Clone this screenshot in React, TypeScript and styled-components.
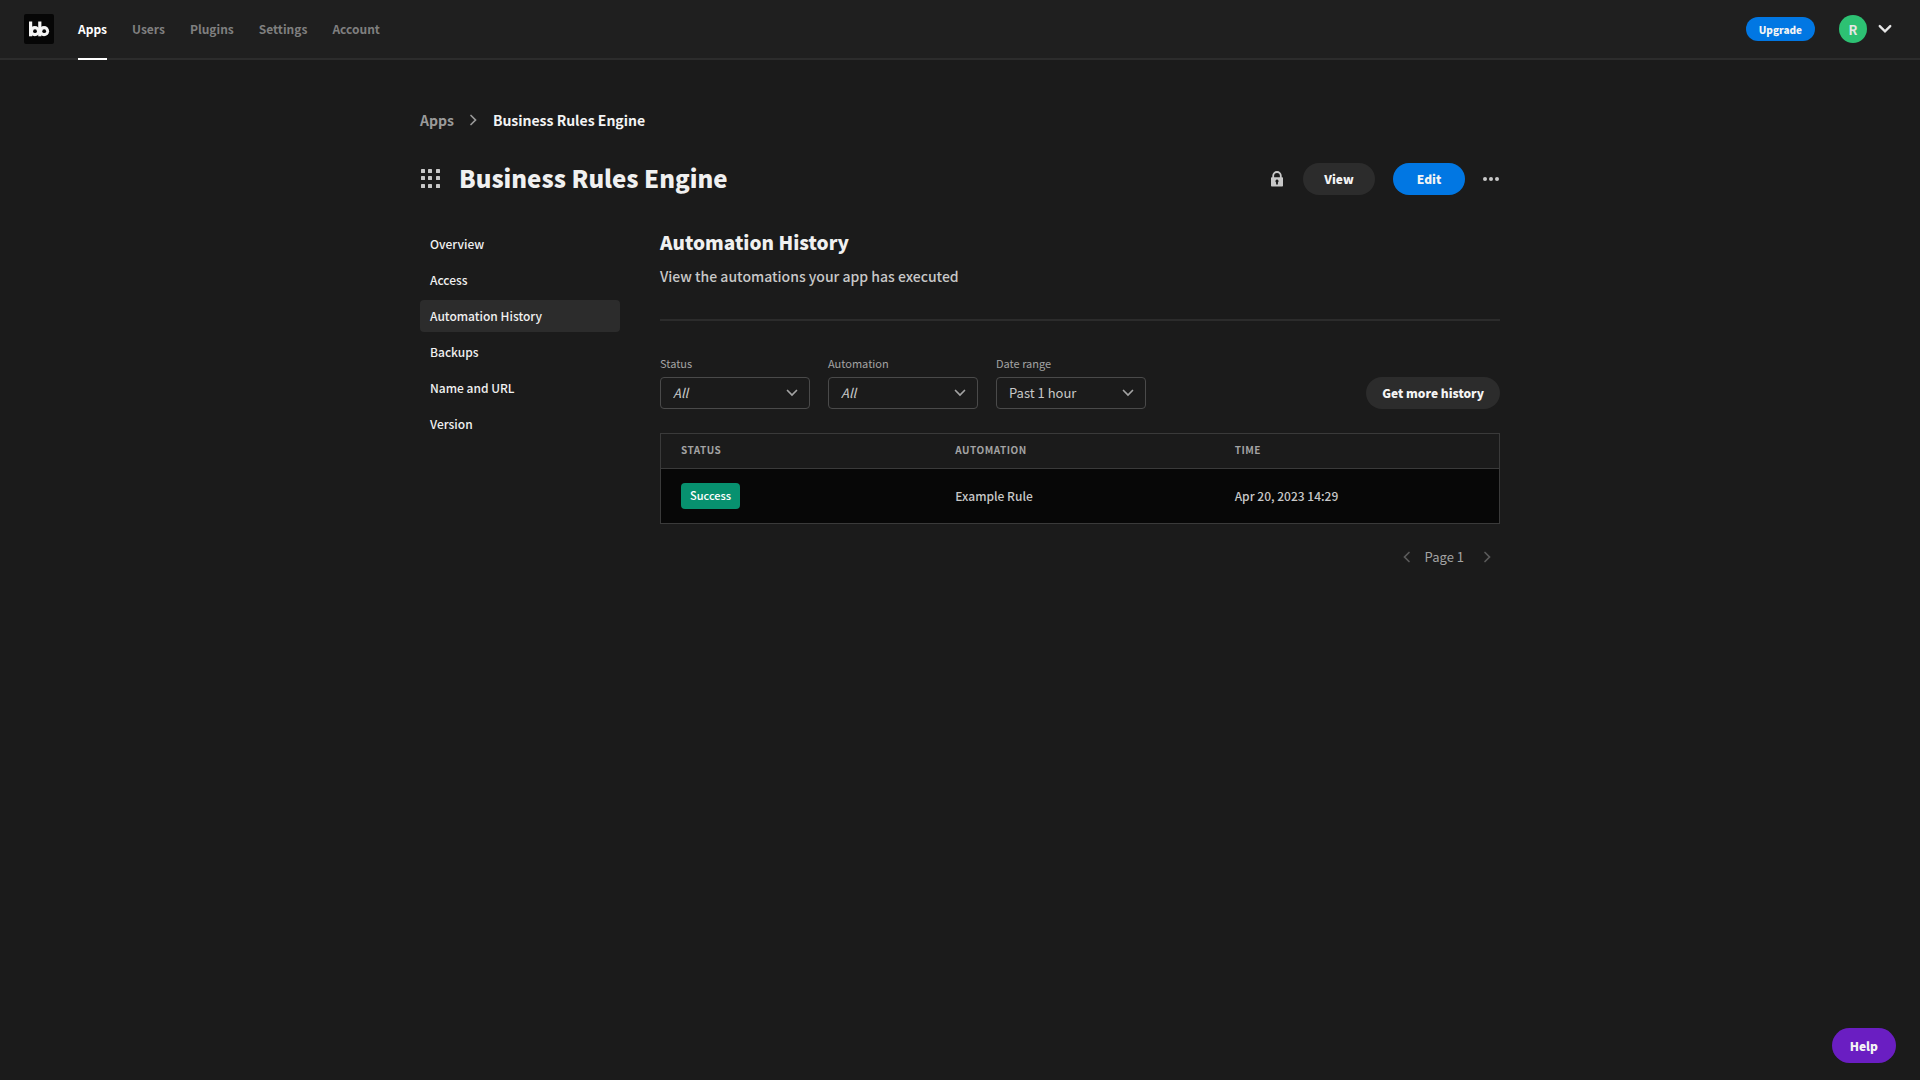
import React from "react";
import styled, { createGlobalStyle, css } from "styled-components";

const GlobalStyle = createGlobalStyle`
  *, *::before, *::after { box-sizing: border-box; }
  body {
    margin: 0;
    background: #1b1b1b;
    color: #f0f0f0;
    font-family: "Source Sans Pro", "Noto Sans CJK SC", "Noto Sans", sans-serif;
    font-size: 13px;
    line-height: 20px;
  }
  h1, h2, p, ol, ul { margin: 0; padding: 0; }
  ol, ul { list-style: none; }
  button, select, input { font-family: inherit; }
  a { color: inherit; text-decoration: none; }
  svg { display: block; }
`;

const TopBar = styled.header`
  display: flex;
  align-items: stretch;
  justify-content: space-between;
  height: 60px;
  padding: 0 24px;
  background: #1f1f1f;
  border-bottom: 2px solid #2c2c2c;
`;

const BarGroup = styled.div`
  display: flex;
  align-items: center;
  gap: 24px;
`;

const Nav = styled.nav`
  display: flex;
  align-self: stretch;
  gap: 25px;
`;

const NavLink = styled.a<{ $active?: boolean }>`
  display: flex;
  align-items: center;
  height: 60px;
  padding-bottom: 2px;
  font-size: 12px;
  font-weight: 600;
  color: ${(p) => (p.$active ? "#ffffff" : "#7f7f7f")};
  box-shadow: ${(p) => (p.$active ? "inset 0 -2px 0 #ffffff" : "none")};
`;

const PillButton = styled.button<{ $tone: "blue" | "grey" | "purple"; $size?: "s" | "m" | "l" }>`
  border: 0;
  border-radius: 18px;
  color: #f4f4f4;
  font-weight: 900;
  cursor: pointer;
  background: ${(p) => ({ blue: "#0177e3", grey: "#2c2c2c", purple: "#6a1ec2" })[p.$tone]};
  ${(p) =>
    ({
      s: css`height: 24px; padding: 0 13px; font-size: 10px;`,
      m: css`height: 32px; min-width: 72px; padding: 0 16px 2px; font-size: 12px;`,
      l: css`height: 35px; padding: 0 18px 1px; font-size: 12px;`,
    })[p.$size ?? "m"]}
`;

const IconButton = styled.button`
  display: flex;
  align-items: center;
  justify-content: center;
  padding: 0;
  border: 0;
  background: none;
  color: #c8c8c8;
  cursor: pointer;
  &:disabled { color: #5a5a5a; cursor: default; }
`;

const Avatar = styled.span`
  display: grid;
  place-items: center;
  width: 28px;
  height: 28px;
  border-radius: 50%;
  background: #2dc173;
  font-weight: 700;
`;

const UserMenu = styled.button`
  display: flex;
  align-items: center;
  gap: 11px;
  padding: 0 4px 0 0;
  border: 0;
  background: none;
  color: #e6e6e6;
  font-size: 13px;
  cursor: pointer;
`;

const Page = styled.main`
  max-width: 1080px;
  margin: 0 auto;
  padding-top: 48px;
`;

const Crumbs = styled.ol`
  display: flex;
  align-items: center;
  height: 24px;
  gap: 14px;
  font-size: 14px;
  font-weight: 600;
  color: #9a9a9a;
`;

const Crumb = styled.li<{ $current?: boolean }>`
  display: flex;
  align-items: center;
  gap: 13px;
  color: ${(p) => (p.$current ? "#f4f4f4" : "inherit")};
`;

const TitleRow = styled.div`
  display: flex;
  align-items: center;
  justify-content: space-between;
  height: 36px;
  margin-top: 29px;
`;

const TitleGroup = styled.div`
  display: flex;
  align-items: center;
  gap: 18px;
  padding-bottom: 2px;
`;

const AppTitle = styled.h1`
  font-size: 24px;
  line-height: 34px;
  font-weight: 900;
`;

const Actions = styled.div`
  display: flex;
  align-items: center;
  gap: 18px;
`;

const Columns = styled.div`
  display: grid;
  grid-template-columns: 200px minmax(0, 1fr);
  gap: 40px;
  margin-top: 31px;
`;

const SideNav = styled.nav`
  display: flex;
  flex-direction: column;
  gap: 4px;
`;

const SideLink = styled.a<{ $active?: boolean }>`
  height: 32px;
  padding: 0 10px;
  border-radius: 4px;
  font-size: 12px;
  font-weight: 500;
  line-height: 32px;
  background: ${(p) => (p.$active ? "#2c2c2c" : "transparent")};
`;

const SectionTitle = styled.h2`
  font-size: 19px;
  line-height: 28px;
  font-weight: 900;
`;

const SectionText = styled.p`
  margin-top: 8px;
  font-size: 14px;
  font-weight: 500;
  line-height: 24px;
  color: #c8c8c8;
`;

const Divider = styled.hr`
  height: 2px;
  margin: 31px 0 32px;
  border: 0;
  background: #2c2c2c;
`;

const Filters = styled.div`
  display: flex;
  align-items: flex-end;
  gap: 18px;
`;

const Spacer = styled.div`
  flex: 1;
`;

const Field = styled.div`
  width: 150px;
`;

const FieldLabel = styled.label`
  display: block;
  height: 24px;
  font-size: 11px;
  line-height: 20px;
  color: #a3a3a3;
`;

const SelectBox = styled.div`
  display: grid;
  align-items: center;
  > * { grid-area: 1 / 1; }
  > svg { justify-self: end; margin-right: 12px; pointer-events: none; color: #a3a3a3; }
`;

const Select = styled.select<{ $placeholder?: boolean }>`
  width: 100%;
  height: 32px;
  padding: 0 32px 1px 12px;
  appearance: none;
  border: 1px solid #4a4a4a;
  border-radius: 4px;
  background: transparent;
  color: #c8c8c8;
  font-size: 13px;
  font-style: ${(p) => (p.$placeholder ? "italic" : "normal")};
`;

const Table = styled.table`
  width: 100%;
  margin-top: 24px;
  table-layout: fixed;
  border-collapse: separate;
  border-spacing: 0;
  border: 1px solid #3a3a3a;
  text-align: left;
  th, td { padding: 0 15px; }
  th:first-child, td:first-child { padding-left: 20px; }
  th {
    height: 35px;
    padding-bottom: 2px;
    border-bottom: 1px solid #3a3a3a;
    color: #a3a3a3;
    font-size: 10px;
    line-height: 16px;
    font-weight: 700;
    letter-spacing: 0.05em;
    text-transform: uppercase;
  }
  td {
    height: 54px;
    padding-bottom: 1px;
    background: #070707;
    color: #c8c8c8;
    font-size: 12px;
    font-weight: 500;
  }
`;

const StatusBadge = styled.span`
  display: inline-block;
  height: 26px;
  padding: 0 9px;
  border-radius: 4px;
  background: #07916f;
  color: #ffffff;
  font-size: 11px;
  line-height: 25px;
  vertical-align: middle;
`;

const Pagination = styled.div`
  display: flex;
  align-items: center;
  justify-content: flex-end;
  gap: 12px;
  height: 20px;
  margin-top: 23px;
  padding-right: 7px;
  color: #a3a3a3;
`;

const PageLabel = styled.span`
  padding-right: 5px;
`;

const HelpSlot = styled.div`
  position: fixed;
  right: 24px;
  bottom: 17px;
`;

type ChevronProps = { size: number; dir: "down" | "left" | "right"; weight?: number };

const CHEVRON_POINTS = {
  down: "1.5,3.5 6,8 10.5,3.5",
  left: "8,1.5 3.5,6 8,10.5",
  right: "4,1.5 8.5,6 4,10.5",
};

function Chevron({ size, dir, weight = 1.7 }: ChevronProps) {
  return (
    <svg width={size} height={size} viewBox="0 0 12 12" fill="none" stroke="currentColor" strokeWidth={weight} strokeLinecap="round" aria-hidden="true">
      <polyline points={CHEVRON_POINTS[dir]} />
    </svg>
  );
}

function Logo() {
  return (
    <svg width="30" height="30" viewBox="0 0 30 30" role="img" aria-label="Budibase">
      <rect width="30" height="30" rx="2" fill="#060606" />
      <g fill="#f4f4f4">
        <path d="M5 7.5h3.2v14.8H5z" />
        <path d="M14.2 7.5h3.2v14.8h-3.2z" />
        <circle cx="10.8" cy="17.2" r="5.1" />
        <circle cx="20" cy="17.2" r="5.1" />
      </g>
      <circle cx="11" cy="17.2" r="1.9" fill="#060606" />
      <circle cx="20.2" cy="17.2" r="1.9" fill="#060606" />
    </svg>
  );
}

function AppGridIcon() {
  const steps = [1, 8, 16];
  return (
    <svg width="21" height="21" viewBox="0 0 21 21" fill="#c8c8c8" aria-hidden="true">
      {steps.map((y) => steps.map((x) => <rect key={`${x}-${y}`} x={x} y={y} width="4" height="4" rx="0.6" />))}
    </svg>
  );
}

function LockIcon() {
  return (
    <svg width="15" height="16" viewBox="0 0 15 16" aria-hidden="true">
      <path d="M3.2 7V4.8a3.8 3.8 0 0 1 7.6 0V7" fill="none" stroke="#c8c8c8" strokeWidth="1.8" />
      <rect x="1" y="6.2" width="12" height="9.3" rx="0.8" fill="#c8c8c8" />
      <path d="M7 8.6a1.6 1.6 0 0 1 .9 2.9v2H6.1v-2A1.6 1.6 0 0 1 7 8.6z" fill="#1b1b1b" />
    </svg>
  );
}

function MoreIcon() {
  return (
    <svg width="17" height="6" viewBox="0 0 17 6" fill="#c8c8c8" aria-hidden="true">
      <circle cx="2" cy="3" r="2" />
      <circle cx="8" cy="3" r="2" />
      <circle cx="14" cy="3" r="2" />
    </svg>
  );
}

const NAV = ["Apps", "Users", "Plugins", "Settings", "Account"];
const SIDE = ["Overview", "Access", "Automation History", "Backups", "Name and URL", "Version"];
const FILTERS = [
  { id: "status", label: "Status", value: "All", placeholder: true },
  { id: "automation", label: "Automation", value: "All", placeholder: true },
  { id: "range", label: "Date range", value: "Past 1 hour", placeholder: false },
];
const ROWS = [{ status: "Success", automation: "Example Rule", time: "Apr 20, 2023 14:29" }];

export default function App() {
  return (
    <>
      <GlobalStyle />
      <TopBar>
        <BarGroup>
          <Logo />
          <Nav>
            {NAV.map((item) => (
              <NavLink key={item} href="#" $active={item === "Apps"}>{item}</NavLink>
            ))}
          </Nav>
        </BarGroup>
        <BarGroup>
          <PillButton $tone="blue" $size="s">Upgrade</PillButton>
          <UserMenu aria-label="User menu">
            <Avatar>R</Avatar>
            <Chevron size={14} dir="down" weight={2} />
          </UserMenu>
        </BarGroup>
      </TopBar>
      <Page>
        <Crumbs>
          <Crumb><a href="#">Apps</a><Chevron size={12} dir="right" /></Crumb>
          <Crumb $current>Business Rules Engine</Crumb>
        </Crumbs>
        <TitleRow>
          <TitleGroup>
            <AppGridIcon />
            <AppTitle>Business Rules Engine</AppTitle>
          </TitleGroup>
          <Actions>
            <IconButton aria-label="Locked"><LockIcon /></IconButton>
            <PillButton $tone="grey">View</PillButton>
            <PillButton $tone="blue">Edit</PillButton>
            <IconButton aria-label="More actions"><MoreIcon /></IconButton>
          </Actions>
        </TitleRow>
        <Columns>
          <SideNav>
            {SIDE.map((item) => (
              <SideLink key={item} href="#" $active={item === "Automation History"}>{item}</SideLink>
            ))}
          </SideNav>
          <section>
            <SectionTitle>Automation History</SectionTitle>
            <SectionText>View the automations your app has executed</SectionText>
            <Divider />
            <Filters>
              {FILTERS.map((f) => (
                <Field key={f.id}>
                  <FieldLabel htmlFor={f.id}>{f.label}</FieldLabel>
                  <SelectBox>
                    <Select id={f.id} $placeholder={f.placeholder}>
                      <option>{f.value}</option>
                    </Select>
                    <Chevron size={12} dir="down" />
                  </SelectBox>
                </Field>
              ))}
              <Spacer />
              <PillButton $tone="grey">Get more history</PillButton>
            </Filters>
            <Table>
              <thead>
                <tr><th scope="col">Status</th><th scope="col">Automation</th><th scope="col">Time</th></tr>
              </thead>
              <tbody>
                {ROWS.map((row) => (
                  <tr key={row.time}>
                    <td><StatusBadge>{row.status}</StatusBadge></td>
                    <td>{row.automation}</td>
                    <td>{row.time}</td>
                  </tr>
                ))}
              </tbody>
            </Table>
            <Pagination>
              <IconButton disabled aria-label="Previous page"><Chevron size={12} dir="left" /></IconButton>
              <PageLabel>Page 1</PageLabel>
              <IconButton disabled aria-label="Next page"><Chevron size={12} dir="right" /></IconButton>
            </Pagination>
          </section>
        </Columns>
      </Page>
      <HelpSlot>
        <PillButton $tone="purple" $size="l">Help</PillButton>
      </HelpSlot>
    </>
  );
}
